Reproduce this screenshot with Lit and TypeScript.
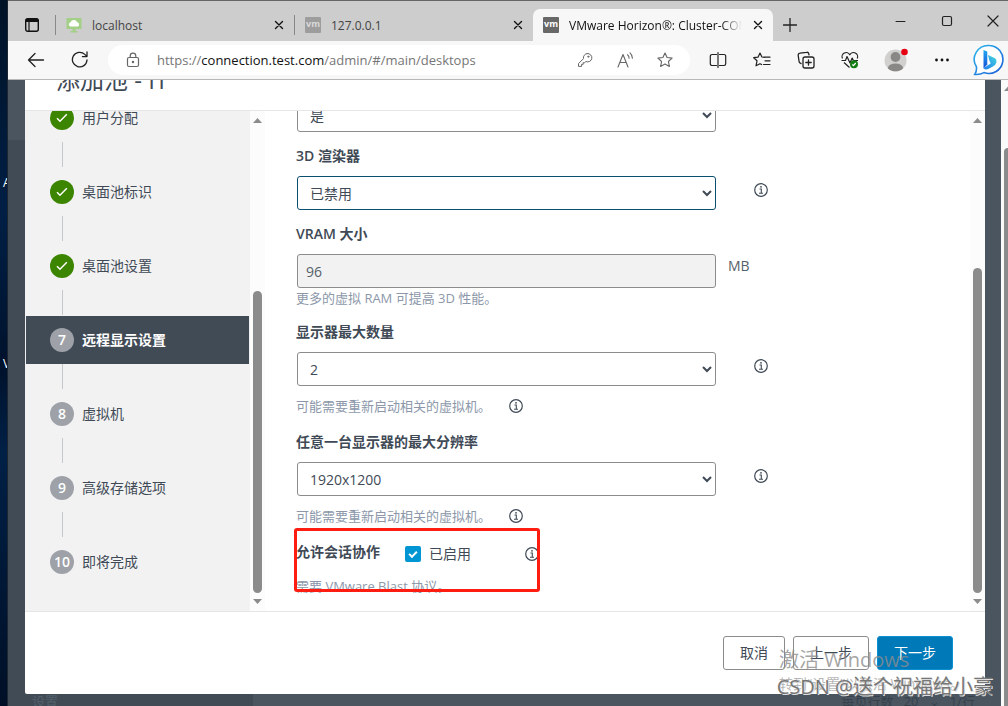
import { LitElement, html, svg, css } from "lit";
import { customElement, property } from "lit/decorators.js";

const stroke = (size: number, body: unknown, width = 1.2) => html`
  <svg width=${size} height=${size} viewBox="0 0 ${size} ${size}" fill="none" stroke="currentColor"
    stroke-width=${width} stroke-linecap="round" stroke-linejoin="round" aria-hidden="true">${body}</svg>`;

const icons = {
  tabs: html`<svg width="16" height="16" viewBox="0 0 16 16" aria-hidden="true">
    <rect x="1.7" y="1.7" width="12.6" height="12.6" rx="2" fill="none" stroke="#111" stroke-width="1.4"/>
    <path d="M1.5 5V3.4Q1.5 1.5 3.4 1.5h9.2q1.9 0 1.9 1.9V5z" fill="#111"/>
    <path d="M5 5v9" stroke="#111" stroke-width="1.2"/></svg>`,
  horizon: html`<svg width="16" height="16" viewBox="0 0 16 16" aria-hidden="true">
    <path d="M.5 1h15v11H.5z" fill="#a3cf86"/><path d="M6.500 12h3v2h2v1.500h-7V14h2z" fill="#a3cf86"/>
    <path d="M4.200 9.500a2.200 2.200 0 0 1 .3-4.200 3.600 3.600 0 0 1 6.700 0 2.200 2.200 0 0 1 .6 4.200z" fill="#fff"/></svg>`,
  close: stroke(10, svg`<path d="M1.500 1.500l7 7M8.500 1.500l-7 7"/>`, 1.4),
  plus: stroke(14, svg`<path d="M7 .5v13M.5 7h13"/>`, 1.3),
  min: stroke(12, svg`<path d="M1 6.500h9"/>`, 1),
  max: stroke(12, svg`<rect x="1.500" y="1.500" width="9" height="9" rx="1.500"/>`),
  winClose: stroke(12, svg`<path d="M1 1l10 10M11 1L1 11"/>`),
  back: stroke(18, svg`<path d="M16.500 9H1.500M8 2.500L1.500 9 8 15.500"/>`, 1.3),
  reload: stroke(18, svg`<path d="M16 9a7.300 7.300 0 1 1-2.200-5.600l2 2M16 1v4.600h-4.600"/>`, 1.3),
  lock: stroke(16, svg`<rect x="2.500" y="5.500" width="11" height="9" rx="1.500"/><path d="M5.200 5.500V4a2.800 2.800 0 0 1 5.600 0v1.500"/><circle cx="8" cy="10" r=".6" fill="currentColor"/>`),
  key: stroke(16, svg`<path d="M10.300 1.500a4.200 4.200 0 1 1-1.400 8l-1.200 1.200H6.200v1.600H4.600v2.100H1.500v-2.800l5-5A4.200 4.200 0 0 1 10.300 1.500z"/><circle cx="11.300" cy="4.700" r=".6"/>`, 1),
  read: stroke(18, svg`<path d="M2 16L7 3.500 12 16M3.800 11.500h6.400M11.500 3.800a4 4 0 0 1 1.600 3.400M14 1.800a7 7 0 0 1 2.400 5.400"/>`, 1.1),
  star: stroke(16, svg`<path d="M8 1l2.100 4.500 5 .6-3.700 3.400 1 4.900L8 12l-4.400 2.400 1-4.900L.9 6.100l5-.6z"/>`, 1.1),
  split: stroke(18, svg`<path d="M7.500 3.500H3a1.700 1.700 0 0 0-1.700 1.700v7.600A1.700 1.700 0 0 0 3 14.500h4.500M10.500 3.500H15a1.700 1.700 0 0 1 1.700 1.700v7.600a1.700 1.700 0 0 1-1.700 1.700h-4.500M9 1.500v15"/>`),
  favs: stroke(18, svg`<path d="M11.500 6.300l-2.600-.3L7 2 5 6.200l-4.300.5L4 9.800l-1 5 4-2.100 1.600.8M10.500 6.200H17M12 9.800h5M10.500 13.500H17"/>`, 1.2),
  collections: stroke(18, svg`<path d="M4 12.500A2.500 2.500 0 0 1 2 10L1.200 4.500A2 2 0 0 1 3 2.200L9.500 1.300a2 2 0 0 1 2.300 1.500l.2 1"/><rect x="6" y="6" width="11" height="11" rx="2"/><path d="M11.500 8.800v5.400M8.800 11.500h5.400"/>`, 1.3),
  heart: html`<svg width="18" height="18" viewBox="0 0 18 18" fill="none" stroke="#222" stroke-width="1.200" stroke-linejoin="round" aria-hidden="true">
    <path d="M1.500 7.500A4 4 0 0 1 8.800 3.800a4 4 0 0 1 7.400 3.700M.5 9.500h4l1.500-4 3 6.500 2.200-5 1.200 2.500H17M3 11.500l5.500 5"/>
    <circle cx="13" cy="13.300" r="4" fill="#137c13" stroke="none"/><path d="M11.300 13.500l1.200 1.200 2.200-2.700" stroke="#fff"/></svg>`,
  avatar: html`<svg width="24" height="24" viewBox="0 0 24 24" aria-hidden="true">
    <circle cx="11.500" cy="12.500" r="11" fill="#d2d0ce"/><circle cx="11.500" cy="9" r="4.900" fill="#8a8886"/>
    <path d="M3.800 20.200a7.800 5.500 0 0 1 15.400 0 11 11 0 0 1-15.400 0z" fill="#8a8886"/>
    <circle cx="20.500" cy="4" r="3.300" fill="#e60012"/></svg>`,
  dots: html`<svg width="16" height="16" viewBox="0 0 16 16" aria-hidden="true"><g fill="#111"><circle cx="2.500" cy="8" r="1.400"/><circle cx="8" cy="8" r="1.400"/><circle cx="13.500" cy="8" r="1.400"/></g></svg>`,
  bing: html`<svg width="32" height="32" viewBox="0 0 32 32" aria-hidden="true">
    <defs><linearGradient id="ring" x1="0" y1="0" x2="1" y2="1"><stop offset="0" stop-color="#2bb8ea"/><stop offset="1" stop-color="#1c5cd8"/></linearGradient>
    <linearGradient id="b" x1="0" y1="0" x2="0" y2="1"><stop offset="0" stop-color="#1fa7f0"/><stop offset="1" stop-color="#1750d8"/></linearGradient>
    <linearGradient id="c" x1="1" y1="0" x2="0" y2="1"><stop offset="0" stop-color="#45d8e0"/><stop offset="1" stop-color="#1f7bea"/></linearGradient></defs>
    <path d="M16.500 1.500A14 14 0 1 1 11 28.600q-4 2.200-9.200 1.800 2-2.700 1.700-7.400A14 14 0 0 1 16.500 1.500z" fill="#fff" stroke="url(#ring)" stroke-width="1.600"/>
    <path d="M10.500 6l3.800 1.400v13.200l-3.800 3.800z" fill="url(#b)"/>
    <path d="M15 11l6.500 3q2.600 1.400 1.800 4.700-.8 2.400-3 3.600l-5 2.800q-3.400 1.400-4.800-1.200l7.200-4.300-1.600-3.800z" fill="url(#c)"/></svg>`,
  check: html`<svg width="12" height="12" viewBox="0 0 12 12" fill="none" stroke="#fff" stroke-width="1.500" aria-hidden="true"><path d="M1 6.200l3 3L10.800 2.200"/></svg>`,
};

@customElement("info-button")
class InfoButton extends LitElement {
  static styles = css`
    :host { display: block; flex: none; }
    .info { display: block; width: 14px; height: 14px; padding: 0; border: 0; background: none; color: #3f4a56; }
    svg { display: block; }
  `;
  render() {
    return html`<button class="info" aria-label="信息"><svg width="14" height="14" viewBox="0 0 14 14" fill="none" stroke="currentColor" aria-hidden="true">
      <circle cx="7" cy="7" r="6.300" stroke-width="1.200"/><path d="M5.500 6h1.800v4M5 10.300h4" stroke-width="1.100"/><circle cx="7" cy="3.800" r=".9" fill="currentColor" stroke="none"/></svg></button>`;
  }
}

@customElement("scroll-rail")
class ScrollRail extends LitElement {
  @property({ type: Number }) start = 0;
  static styles = css`
    :host { display: flex; flex-direction: column; align-items: center; flex: none; width: 15px; background: #fcfcfc; box-sizing: border-box; padding: 6px 0; }
    svg { display: block; flex: none; }
    .track { flex: 1; width: 9px; margin: 6px 0; display: flex; flex-direction: column; }
    .thumb { flex: 1; border-radius: 5px; background: #8b8b8b; }
  `;
  render() {
    return html`
      <svg width="9" height="6" viewBox="0 0 9 6"><path d="M0 6L4.500 1 9 6z" fill="#8b8b8b"/></svg>
      <div class="track"><div style="height:${this.start}%"></div><div class="thumb"></div></div>
      <svg width="9" height="6" viewBox="0 0 9 6"><path d="M0 0L4.500 5 9 0z" fill="#8b8b8b"/></svg>`;
  }
}

@customElement("browser-chrome")
class BrowserChrome extends LitElement {
  static styles = css`
    :host { display: block; font-family: "Open Sans", "Noto Sans CJK SC", sans-serif; color: #222; }
    button { border: 0; padding: 0; background: none; color: inherit; display: flex; align-items: center; justify-content: center; flex: none; font: inherit; }
    svg { display: block; flex: none; }
    .tabbar { display: flex; height: 41px; box-sizing: border-box; background: #cdcdcd; border-top: 1px solid #666; padding-top: 8px; }
    .menu { width: 47px; height: 32px; }
    .tab { flex: 0 1 238px; min-width: 0; display: flex; align-items: center; gap: 10px; height: 32px; box-sizing: border-box; padding: 0 9px 0 10px; font-size: 12px; color: #444; }
    .tab .title { flex: 1; min-width: 0; white-space: nowrap; overflow: hidden; }
    .tab.on { flex-basis: 240px; background: #f7f7f7; border-radius: 7px 7px 0 0; color: #111; }
    .tab.on .title { mask-image: linear-gradient(90deg, #000 88%, transparent); }
    .sep { width: 1px; height: 20px; margin: 6px 0; background: #888; flex: none; }
    .tab button { width: 12px; height: 20px; color: #111; }
    .vm { width: 16px; height: 16px; flex: none; background: #9d9d9d; color: #d9d9d9; font-size: 9px; line-height: 14px; font-weight: 700; text-align: center; border-radius: 1px; }
    .on .vm { background: #686868; color: #fff; }
    .new { width: 34px; height: 32px; }
    .controls { margin-left: auto; display: flex; gap: 16px; }
    .controls button { width: 30px; height: 24px; }
    .toolbar { display: flex; align-items: center; height: 39px; box-sizing: border-box; background: #f7f7f7; border-bottom: 1px solid #b8b8b8; padding-left: 6px; }
    .nav { width: 44px; height: 32px; }
    .nav.profile { width: 48px; }
    .pill { flex: 1; min-width: 0; height: 30px; margin: 0 6px; padding-right: 5px; background: #fff; border-radius: 15px; display: flex; align-items: center; color: #666; }
    .lock { width: 49px; height: 30px; }
    .url { flex: 1; min-width: 0; font-size: 13px; line-height: 30px; color: #767676; white-space: nowrap; overflow: hidden; text-decoration: none; }
    .url b { font-weight: 400; color: #111; }
    .act { width: 40px; height: 30px; }
    .bing { width: 44px; height: 32px; justify-content: flex-end; padding-right: 3px; }
  `;
  render() {
    const tools: [string, unknown, string?][] = [["分屏", icons.split], ["收藏夹", icons.favs], ["集锦", icons.collections], ["浏览器概要", icons.heart], ["个人资料", icons.avatar, "profile"], ["更多", icons.dots]];
    return html`
      <div class="tabbar">
        <button class="menu" aria-label="标签页操作">${icons.tabs}</button>
        <i class="sep"></i>
        <div class="tab">${icons.horizon}<span class="title">localhost</span><button aria-label="关闭">${icons.close}</button></div>
        <i class="sep"></i>
        <div class="tab"><span class="vm">vm</span><span class="title">127.0.0.1</span><button aria-label="关闭">${icons.close}</button></div>
        <div class="tab on"><span class="vm">vm</span><span class="title">VMware Horizon®: Cluster-CONNECTION</span><button aria-label="关闭">${icons.close}</button></div>
        <button class="new" aria-label="新建标签页">${icons.plus}</button>
        <div class="controls">
          <button aria-label="最小化">${icons.min}</button><button aria-label="最大化">${icons.max}</button><button aria-label="关闭窗口">${icons.winClose}</button>
        </div>
      </div>
      <div class="toolbar">
        <button class="nav" aria-label="后退">${icons.back}</button>
        <button class="nav" aria-label="刷新">${icons.reload}</button>
        <div class="pill">
          <button class="lock" aria-label="站点信息">${icons.lock}</button>
          <a class="url" href="#/main/desktops">https://<b>connection.test.com</b>/admin/#/main/desktops</a>
          <button class="act" aria-label="密码">${icons.key}</button>
          <button class="act" aria-label="大声朗读">${icons.read}</button>
          <button class="act" aria-label="收藏">${icons.star}</button>
        </div>
        ${tools.map(([name, icon, kind]) => html`<button class="nav ${kind ?? ""}" aria-label=${name}>${icon}</button>`)}
        <button class="bing" aria-label="必应">${icons.bing}</button>
      </div>`;
  }
}

const steps = [
  { n: 4, label: "用户分配", done: true },
  { n: 5, label: "桌面池标识", done: true },
  { n: 6, label: "桌面池设置", done: true },
  { n: 7, label: "远程显示设置", active: true },
  { n: 8, label: "虚拟机" },
  { n: 9, label: "高级存储选项" },
  { n: 10, label: "即将完成" },
];

@customElement("pool-wizard")
class PoolWizard extends LitElement {
  static styles = css`
    :host { display: flex; flex-direction: column; flex: 1; min-width: 0; background: #fff; border-radius: 0 0 2px 2px; overflow: hidden;
      font: 14px/20px "Open Sans", "Noto Sans CJK SC", sans-serif; color: #3f4a56; }
    button, select, input { font: inherit; color: inherit; box-sizing: border-box; margin: 0; }
    .head { display: flex; align-items: flex-end; flex: none; height: 31px; box-sizing: border-box; overflow: hidden; padding: 0 31px 16px; border-bottom: 1px solid #e6e6e6; }
    .head h1 { margin: 0; font-size: 24px; line-height: 28px; font-weight: 400; white-space: nowrap; }
    .body { flex: 1; min-height: 0; display: flex; }
    .steps { width: 225px; flex: none; box-sizing: border-box; background: #f2f2f2; display: flex; flex-direction: column; justify-content: flex-end; overflow: hidden; padding: 0 1px 25px; margin: 0; list-style: none; }
    .step { flex: none; }
    .step + .step::before { content: ""; display: block; width: 1px; height: 25px; margin: 0 0 1px 36px; background: #c4c8cc; }
    .step a { display: flex; align-items: center; gap: 8px; height: 48px; box-sizing: border-box; padding-left: 24px; color: inherit; text-decoration: none; }
    .step a.active { background: #414b56; color: #fff; font-weight: 700; }
    .dot { width: 24px; height: 24px; border-radius: 50%; background: #9ea2a8; color: #fff; display: flex; align-items: center; justify-content: center; font-weight: 600; }
    .dot.done { background: #3c8500; }
    .pane { flex: 1; min-width: 0; padding: 0 0 18px 28px; display: flex; }
    .view { flex: 1; min-width: 0; overflow: hidden; padding-left: 3px; }
    .form { margin-top: -13px; position: relative; display: flex; flex-direction: column; gap: 14px; }
    .field > label, .title { display: block; font-weight: 600; margin-bottom: 10px; }
    .row { display: flex; align-items: flex-start; padding-left: 1px; }
    .row > select, .row > input { flex: 0 1 419px; min-width: 0; height: 34px; border: 1px solid #8c8c8c; border-radius: 3px; background-color: #fff; padding: 0 8px; }
    .row > select:focus, .row > select.current { border-color: #0a4f6e; outline: none; }
    .row > input:disabled { background: #f2f2f2; color: #565f69; }
    .row info-button { margin: 7px 0 0 38px; }
    .unit { margin-left: 12px; line-height: 24px; color: #565f69; }
    .help { display: flex; align-items: center; gap: 18px; font-size: 13px; color: #8c98aa; white-space: nowrap; }
    .help.apart { margin: 10px 0 2px; }
    .collab { position: relative; }
    .collab .line { display: flex; align-items: center; height: 20px; }
    .collab .title { margin: 0 25px 0 0; }
    .tick { display: flex; align-items: center; gap: 8px; margin: 4px 54px 0 0; }
    .tick input { appearance: none; width: 16px; height: 16px; border-radius: 2px; background: #0095d3; display: grid; place-items: center; }
    .tick input::after { content: ""; width: 6px; height: 3px; border: solid #fff; border-width: 0 0 2px 2px; transform: translateY(-1px) rotate(-45deg); }
    .collab info-button { margin-top: 4px; }
    .collab .help { margin-top: 14px; }
    .mark { position: absolute; left: -2px; top: -14px; width: 246px; height: 64px; box-sizing: border-box; border: 3px solid #ff1c10; border-radius: 3px; pointer-events: none; }
    .foot { flex: none; display: flex; justify-content: flex-end; gap: 8px; padding: 24px 32px; border-top: 1px solid #e6e6e6; }
    .btn { height: 34px; padding: 0 16px; border: 1px solid #8c8c8c; border-radius: 3px; background: #fff; white-space: nowrap; }
    .btn.primary { background: #0079b8; border-color: #0a8fd0; color: #fff; }
  `;
  render() {
    const reboot = html`<div class="help apart"><span>可能需要重新启动相关的虚拟机。</span><info-button></info-button></div>`;
    return html`
      <header class="head"><h1>添加池 - IT</h1></header>
      <div class="body">
        <ol class="steps">${steps.map((s) => html`<li class="step"><a href="#step-${s.n}" class=${s.active ? "active" : ""}>
          <span class="dot ${s.done ? "done" : ""}">${s.done ? icons.check : s.n}</span><span>${s.label}</span></a></li>`)}</ol>
        <scroll-rail .start=${35}></scroll-rail>
        <div class="pane"><div class="view"><form class="form">
          <div class="field"><div class="row"><select aria-label="允许选择协议"><option>是</option></select></div></div>
          <div class="field"><label for="render">3D 渲染器</label>
            <div class="row"><select id="render" class="current"><option>已禁用</option></select><info-button></info-button></div></div>
          <div class="field"><label for="vram">VRAM 大小</label>
            <div class="row"><input id="vram" value="96" disabled /><span class="unit">MB</span></div>
            <div class="help">更多的虚拟 RAM 可提高 3D 性能。</div></div>
          <div class="field"><label for="count">显示器最大数量</label>
            <div class="row"><select id="count"><option>2</option></select><info-button></info-button></div>${reboot}</div>
          <div class="field"><label for="resolution">任意一台显示器的最大分辨率</label>
            <div class="row"><select id="resolution"><option>1920x1200</option></select><info-button></info-button></div>${reboot}</div>
          <div class="collab">
            <div class="line"><span class="title">允许会话协作</span><label class="tick"><input type="checkbox" checked />已启用</label><info-button></info-button></div>
            <div class="help">需要 VMware Blast 协议。</div>
            <div class="mark"></div>
          </div>
        </form></div></div>
        <scroll-rail .start=${30}></scroll-rail>
      </div>
      <footer class="foot">
        <button class="btn">取消</button><button class="btn">上一步</button><button class="btn primary">下一步</button>
      </footer>`;
  }
}

@customElement("app-root")
class AppRoot extends LitElement {
  static styles = css`
    :host { display: flex; height: 100vh; overflow: hidden; position: relative; font-family: "Open Sans", "Noto Sans CJK SC", sans-serif; }
    .desktop { width: 8px; flex: none; overflow: hidden; background: linear-gradient(#001226, #001f45 30%, #00122c 52%, #002046 64%, #000f26); color: #fff; font-size: 12px; line-height: 16px; padding-top: 175px; box-sizing: border-box; border-right: 1px solid #1c2733; }
    .desktop span { display: block; padding-left: 3px; margin-bottom: 165px; }
    .window { flex: 1; min-width: 0; display: flex; flex-direction: column; }
    .page { flex: 1; min-height: 0; display: flex; }
    .stage { flex: 1; min-width: 0; position: relative; display: flex; padding: 0 16px 12px 17px; background: #4a5560; }
    .under { position: absolute; left: 0; top: 60px; bottom: 0; width: 245px; background: #414b56; }
    .ghost { position: absolute; bottom: -4px; font-size: 13px; line-height: 18px; color: #37414b; white-space: nowrap; }
    .ghost.left { left: 24px; color: #52606c; }
    .ghost.right { right: 26px; }
    pool-wizard { position: relative; }
    .outer { width: 7px; flex: none; overflow: hidden; background: #fafafa; display: flex; flex-direction: column; }
    .outer svg { display: block; margin: 5px 0 0 3px; flex: none; }
    .outer .thumb { flex: 1; margin: 57px 0 0 3px; background: #8b8b8b; border-radius: 4px 0 0 0; }
    .watermark { position: absolute; right: 16px; bottom: 0; width: 213px; height: 60px; white-space: nowrap; pointer-events: none; color: rgba(140, 140, 140, 0.8); }
    .watermark .big { font-size: 20px; line-height: 28px; }
    .watermark .small { font-size: 14px; line-height: 20px; color: rgba(150, 150, 150, 0.7); }
    .csdn { position: absolute; right: 15px; bottom: 6px; font-size: 20px; line-height: 26px; white-space: nowrap; color: #777; text-shadow: 1px 1px 0 #ddd; pointer-events: none; }
  `;
  render() {
    return html`
      <div class="desktop"><span>A</span><span>V</span></div>
      <div class="window">
        <browser-chrome></browser-chrome>
        <div class="page">
          <div class="stage">
            <div class="under"></div>
            <span class="ghost left">设置</span><span class="ghost right">每页行数 &nbsp; 20 &nbsp; ⌄ &nbsp; 1/行</span>
            <pool-wizard></pool-wizard>
          </div>
          <div class="outer"><svg width="9" height="6" viewBox="0 0 9 6"><path d="M0 6L4.500 1 9 6z" fill="#8b8b8b"/></svg><div class="thumb"></div></div>
        </div>
      </div>
      <div class="watermark"><div class="big">激活 Windows</div><div class="small">转到“设置”以激活 Windows。</div></div>
      <div class="csdn">CSDN @送个祝福给小豪</div>`;
  }
}
